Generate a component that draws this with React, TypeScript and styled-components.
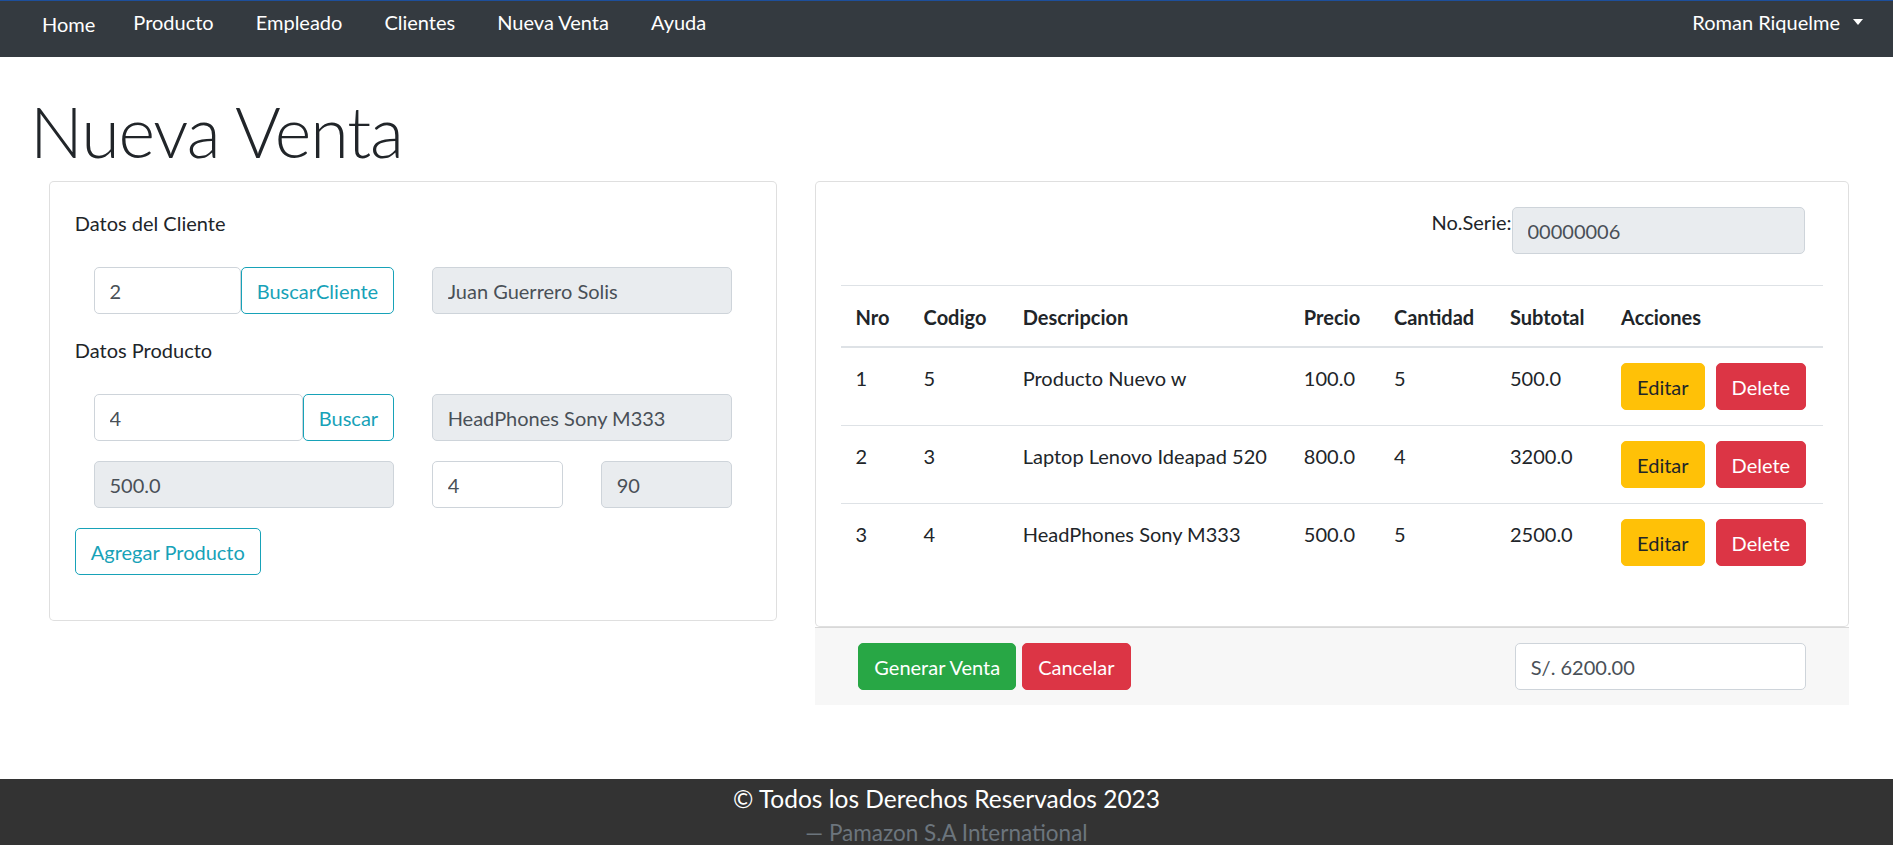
import React from "react";
import styled, { createGlobalStyle } from "styled-components";

type Variant = "info" | "success" | "danger" | "warning";

const palette: Record<Variant, string> = {
  info: "#17a2b8",
  success: "#28a745",
  danger: "#dc3545",
  warning: "#ffc107",
};

const items = [
  { nro: 1, codigo: 5, desc: "Producto Nuevo w", precio: "100.0", cant: 5, sub: "500.0" },
  { nro: 2, codigo: 3, desc: "Laptop Lenovo Ideapad 520", precio: "800.0", cant: 4, sub: "3200.0" },
  { nro: 3, codigo: 4, desc: "HeadPhones Sony M333", precio: "500.0", cant: 5, sub: "2500.0" },
];

const colWidths = [68, 99, 281, 90, 116, 111, 217];

const App = () => {
  return (
    <>
      <GlobalStyle />
      <Navbar>
        <NavLinks>
          <li>
            <NavLink href="#" $offset={2} $right={17}>Home</NavLink>
          </li>
          {["Producto", "Empleado", "Clientes", "Nueva Venta", "Ayuda"].map((l) => (
            <li key={l}>
              <NavLink href="#">{l}</NavLink>
            </li>
          ))}
        </NavLinks>
        <UserToggle href="#">Roman Riquelme</UserToggle>
      </Navbar>

      <Main>
        <Title>Nueva Venta</Title>
        <Row>
          <Col>
            <Card>
              <FieldLabel>Datos del Cliente</FieldLabel>
              <FormRow>
                <FormCol>
                  <InputGroup>
                    <Input type="text" defaultValue="2" />
                    <Button $variant="info" $outline>BuscarCliente</Button>
                  </InputGroup>
                </FormCol>
                <FormCol>
                  <Input type="text" value="Juan Guerrero Solis" readOnly />
                </FormCol>
              </FormRow>

              <FieldLabel>Datos Producto</FieldLabel>
              <FormRow>
                <FormCol>
                  <InputGroup>
                    <Input type="text" defaultValue="4" />
                    <Button $variant="info" $outline>Buscar</Button>
                  </InputGroup>
                </FormCol>
                <FormCol>
                  <Input type="text" value="HeadPhones Sony M333" readOnly />
                </FormCol>
              </FormRow>
              <FormRow>
                <FormCol>
                  <Input type="text" value="500.0" readOnly />
                </FormCol>
                <FormCol>
                  <SplitFields>
                    <Input type="number" defaultValue="4" />
                    <Input type="text" value="90" readOnly />
                  </SplitFields>
                </FormCol>
              </FormRow>
              <FormGroup>
                <Button $variant="info" $outline>Agregar Producto</Button>
              </FormGroup>
            </Card>
          </Col>

          <Col>
            <Card>
              <SerieRow>
                <SerieLabel>No.Serie:</SerieLabel>
                <SerieInput type="text" value="00000006" readOnly />
              </SerieRow>
              <Table>
                <colgroup>
                  {colWidths.map((w, i) => (
                    <col key={i} style={{ width: w }} />
                  ))}
                </colgroup>
                <thead>
                  <tr>
                    <Th>Nro</Th>
                    <Th>Codigo</Th>
                    <Th>Descripcion</Th>
                    <Th>Precio</Th>
                    <Th>Cantidad</Th>
                    <Th>Subtotal</Th>
                    <Th>Acciones</Th>
                  </tr>
                </thead>
                <tbody>
                  {items.map((it) => (
                    <tr key={it.nro}>
                      <Td>{it.nro}</Td>
                      <Td>{it.codigo}</Td>
                      <Td>{it.desc}</Td>
                      <Td>{it.precio}</Td>
                      <Td>{it.cant}</Td>
                      <Td>{it.sub}</Td>
                      <Td>
                        <Actions>
                          <Button $variant="warning">Editar</Button>
                          <Button $variant="danger">Delete</Button>
                        </Actions>
                      </Td>
                    </tr>
                  ))}
                </tbody>
              </Table>
            </Card>
            <CardFooter>
              <FormCol>
                <Actions $gap={6}>
                  <Button $variant="success">Generar Venta</Button>
                  <Button $variant="danger">Cancelar</Button>
                </Actions>
              </FormCol>
              <FormCol>
                <Input type="text" defaultValue="S/. 6200.00" />
              </FormCol>
            </CardFooter>
          </Col>
        </Row>
      </Main>

      <SiteFooter>
        <FooterTitle>© Todos los Derechos Reservados 2023</FooterTitle>
        <FooterSub>Pamazon S.A International</FooterSub>
      </SiteFooter>
    </>
  );
};

const GlobalStyle = createGlobalStyle`
  * { box-sizing: border-box; }
  body {
    margin: 0;
    font-family: "Lato", "Open Sans", sans-serif;
    font-size: 20px;
    line-height: 1.5;
    color: #212529;
    background: #fff;
  }
`;

const Navbar = styled.nav`
  height: 57px;
  background: #343a40;
  border-top: 1px solid #1d4f9c;
  display: flex;
  justify-content: space-between;
  align-items: flex-start;
  padding: 6px 30px 0 21px;
`;

const NavLinks = styled.ul`
  display: flex;
  margin: 0;
  padding: 0;
  list-style: none;
`;

const NavLink = styled.a<{ $offset?: number; $right?: number }>`
  display: block;
  padding: ${(p) => p.$offset ?? 0}px ${(p) => p.$right ?? 21}px 0 21px;
  color: #fff;
  text-decoration: none;
  line-height: 30px;
`;

const UserToggle = styled.a`
  display: flex;
  align-items: center;
  color: #fff;
  text-decoration: none;
  line-height: 30px;

  &::after {
    content: "";
    margin-left: 13px;
    border-top: 6px solid #fff;
    border-left: 5px solid transparent;
    border-right: 5px solid transparent;
  }
`;

const Main = styled.main`
  padding: 0 25px 0 30px;
  margin-bottom: 74px;
`;

const Title = styled.h1`
  margin: 32px 0 8px;
  font-size: 70px;
  font-weight: 300;
  line-height: 1.2;
  letter-spacing: -1.1px;
`;

const Row = styled.div`
  display: grid;
  grid-template-columns: 5fr 7fr;
  align-items: start;
`;

const Col = styled.div`
  padding: 0 18.75px;
`;

const Card = styled.div`
  border: 1px solid rgba(0, 0, 0, 0.125);
  border-radius: 5px;
  padding: 25px;
  background: #fff;
`;

const FieldLabel = styled.label`
  display: block;
  line-height: 30px;
  padding-top: 1px;
  margin-bottom: 29px;
`;

const FormGroup = styled.div`
  margin-bottom: 20px;
`;

const FormRow = styled.div`
  display: grid;
  grid-template-columns: 1fr 1fr;
  margin-bottom: 20px;
`;

const FormCol = styled.div`
  padding: 0 18.75px;
  min-width: 0;
`;

const InputGroup = styled.div`
  display: flex;
`;

const SplitFields = styled.div`
  display: grid;
  grid-template-columns: 1fr 1fr;
  gap: 37.5px;
`;

const Input = styled.input`
  display: block;
  flex: 1;
  width: 100%;
  min-width: 0;
  height: 47px;
  padding: 7.5px 15px;
  font-family: inherit;
  font-size: 20px;
  line-height: 1.5;
  color: #495057;
  background: #fff;
  border: 1px solid #ced4da;
  border-radius: 5px;
  outline: none;

  &[readonly] {
    background: #e9ecef;
  }
`;

const Button = styled.button<{ $variant: Variant; $outline?: boolean }>`
  flex: none;
  display: inline-block;
  height: 47px;
  padding: 7.5px 15px;
  font-family: inherit;
  font-size: 20px;
  line-height: 1.5;
  white-space: nowrap;
  border: 1px solid ${(p) => palette[p.$variant]};
  border-radius: 5px;
  background: ${(p) => (p.$outline ? "transparent" : palette[p.$variant])};
  color: ${(p) =>
    p.$outline ? palette[p.$variant] : p.$variant === "warning" ? "#212529" : "#fff"};
  cursor: pointer;
`;

const SerieRow = styled.div`
  display: flex;
  justify-content: flex-end;
  align-items: flex-start;
  padding-right: 18.75px;
  margin-bottom: 31px;
`;

const SerieLabel = styled.label`
  line-height: 30px;
`;

const SerieInput = styled(Input)`
  flex: none;
  width: 293px;
`;

const Table = styled.table`
  width: 100%;
  table-layout: fixed;
  border-collapse: collapse;
  margin-bottom: 20px;
`;

const Th = styled.th`
  padding: 16px 15px 14px;
  text-align: left;
  vertical-align: bottom;
  font-weight: 700;
  line-height: 30px;
  border-top: 1px solid #dee2e6;
  border-bottom: 2px solid #dee2e6;
  white-space: nowrap;
`;

const Td = styled.td`
  padding: 15px;
  vertical-align: top;
  line-height: 30px;
  border-top: 1px solid #dee2e6;
  white-space: nowrap;
`;

const Actions = styled.div<{ $gap?: number }>`
  display: flex;
  gap: ${(p) => p.$gap ?? 11}px;
`;

const CardFooter = styled.div`
  display: grid;
  grid-template-columns: 8fr 4fr;
  padding: 15px 25px;
  background: #f7f7f7;
  border-top: 1px solid rgba(0, 0, 0, 0.125);
`;

const SiteFooter = styled.footer`
  background: #333;
  text-align: center;
  padding: 3px 0 20px;
`;

const FooterTitle = styled.p`
  margin: 0;
  color: #fff;
  font-size: 24.5px;
  line-height: 33px;
`;

const FooterSub = styled.p`
  margin: 2px 0 0;
  color: #6c757d;
  font-size: 22.5px;
  line-height: 32px;

  &::before {
    content: "\\2014\\00A0";
  }
`;

export default App;
